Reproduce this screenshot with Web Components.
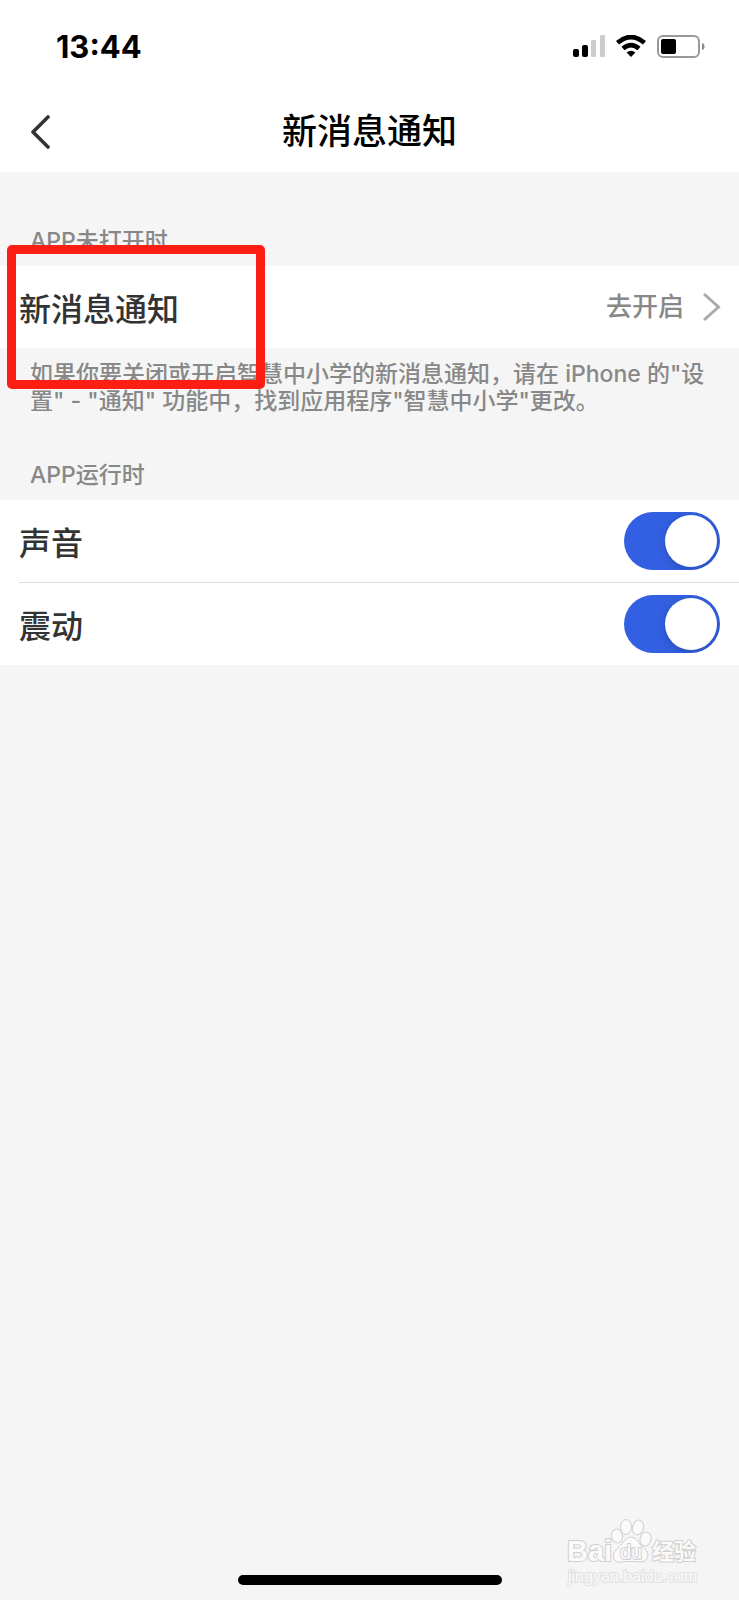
<!DOCTYPE html>
<html lang="zh-CN">
<head>
<meta charset="utf-8">
<meta name="viewport" content="width=device-width, initial-scale=1">
<title>新消息通知</title>
<style>
  html, body { margin: 0; }
  body {
    font-family: Inter, "Noto Sans CJK SC", sans-serif;
    background: #f5f5f5;
    color: #333;
  }
</style>
</head>
<body>
<settings-screen></settings-screen>
<script>
const define = (name, html, setup) => {
  const template = document.createElement('template');
  template.innerHTML = html;
  customElements.define(name, class extends HTMLElement {
    constructor() {
      super();
      this.attachShadow({ mode: 'open' }).append(template.content.cloneNode(true));
    }
    connectedCallback() { if (setup) setup(this, this.shadowRoot); }
  });
};

define('status-bar', `
  <style>
    :host { display: flex; align-items: center; justify-content: space-between; height: 92px; padding: 0 34px 0 56px; box-sizing: border-box; color: #000; }
    time { font-size: 31px; font-weight: 700; line-height: 36px; padding-top: 2px; }
    .icons { display: flex; align-items: center; gap: 11px; }
    svg { display: block; }
  </style>
  <time>13:44</time>
  <div class="icons">
    <svg width="32" height="22" viewBox="0 0 32 22" role="img" aria-label="信号">
      <rect x="0" y="14" width="6" height="8" rx="2"/><rect x="9" y="10" width="6" height="12" rx="2"/>
      <rect x="18" y="5" width="5" height="17" rx="1" fill="#ccc"/><rect x="27" y="0" width="5" height="22" rx="1" fill="#ccc"/>
    </svg>
    <svg width="30" height="22" viewBox="0 0 30 22" role="img" aria-label="无线网络">
      <path d="M1.500 7.800Q15-3.800 28.500 7.800M7 13.600Q15 6.600 23 13.600" fill="none" stroke="#000" stroke-width="4.600"/>
      <path d="M15 22l-4.400-4.400Q15 14 19.400 17.600Z"/>
    </svg>
    <svg width="48" height="23" viewBox="0 0 48 23" role="img" aria-label="电量">
      <rect x="1" y="1" width="41" height="21" rx="5" fill="none" stroke="#999" stroke-width="2"/>
      <rect x="4" y="4" width="15" height="15" rx="2"/>
      <path d="M45 8Q47.5 8.500 47.500 11.500T45 15Z" fill="#888"/>
    </svg>
  </div>`);

define('nav-bar', `
  <style>
    :host { display: grid; grid-template-columns: 80px 1fr 80px; align-items: center; height: 80px; color: #000; }
    button { display: flex; align-items: center; height: 78px; padding: 0 0 0 30px; border: 0; background: none; }
    h1 { margin: 0; text-align: center; font-size: 35px; font-weight: 500; line-height: 44px; padding-bottom: 2px; }
  </style>
  <button type="button" aria-label="返回">
    <svg width="21" height="34" viewBox="0 0 21 34" fill="none" stroke="#333" stroke-width="3.600" stroke-linecap="round" stroke-linejoin="round"><path d="M18 2L3 17L18 32"/></svg>
  </button>
  <h1><slot></slot></h1>`);

define('section-title', `
  <style>
    :host { display: block; padding: 4px 30px 0; }
    h2 { margin: 0; color: #888; font-size: 23px; font-weight: 500; line-height: 50px; }
  </style>
  <h2><slot></slot></h2>`);

define('section-note', `
  <style>
    :host { display: block; padding: 13px 30px 31px; }
    p { margin: 0; color: #888; font-size: 23px; font-weight: 500; line-height: 27px; }
  </style>
  <p><slot></slot></p>`);

define('link-row', `
  <style>
    :host { display: block; position: relative; background: #fff; }
    a { display: flex; align-items: center; justify-content: space-between; height: 82px; padding: 0 18px 0 19px; color: #333; text-decoration: none; font-size: 32px; font-weight: 500; }
    .value { display: flex; align-items: center; gap: 19px; color: #888; font-size: 26px; line-height: 32px; font-weight: 500; }
    svg { display: block; }
  </style>
  <a href="#system-settings">
    <span><slot></slot></span>
    <span class="value"><slot name="value"></slot>
      <svg width="18" height="30" viewBox="0 0 18 30" fill="none" stroke="#aaa" stroke-width="3"><path d="M1 2L15.500 15L1 28"/></svg>
    </span>
  </a>
  <slot name="mark"></slot>`);

define('highlight-box', `
  <style>
    :host { display: block; position: absolute; left: 7px; top: -21px; width: 258px; height: 144px; box-sizing: border-box; border: 9px solid #fc1e12; border-radius: 5px; pointer-events: none; z-index: 1; }
  </style>`);

define('toggle-row', `
  <style>
    :host { display: block; background: #fff; }
    label { display: flex; align-items: center; justify-content: space-between; height: 82px; padding-right: 19px; margin-left: 19px; font-size: 32px; font-weight: 500; }
    :host([divided]) label { border-bottom: 1px solid #ddd; }
    input { appearance: none; display: flex; align-items: center; width: 96px; height: 58px; margin: 0; padding: 0 3px; box-sizing: border-box; border-radius: 29px; background: #ccc; overflow: hidden; }
    input::before { content: ""; width: 52px; height: 52px; border-radius: 50%; background: #fff; box-shadow: 0 2px 10px #0003; }
    input:checked { background: #3360e2; justify-content: flex-end; }
  </style>
  <label><slot></slot><input type="checkbox" role="switch" checked></label>`,
  (host, root) => root.querySelector('input').setAttribute('aria-label', host.textContent));

define('brand-watermark', `
  <style>
    :host { display: block; position: absolute; right: 35px; bottom: 12px; pointer-events: none; }
    svg { display: block; }
    text { paint-order: stroke; stroke: #cfcfcf; stroke-width: 2px; stroke-linejoin: round; fill: #fafafa; }
  </style>
  <svg width="140" height="72" viewBox="0 0 140 72">
    <g fill="#fafafa" stroke="#cfcfcf">
      <ellipse cx="53" cy="20" rx="5.500" ry="7" transform="rotate(-12 53 20)"/>
      <ellipse cx="62" cy="11" rx="5.500" ry="7.500"/>
      <ellipse cx="74" cy="11.500" rx="5.500" ry="7.500" transform="rotate(12 74 11.500)"/>
      <ellipse cx="81.500" cy="23" rx="5.500" ry="7" transform="rotate(15 81.500 23)"/>
      <path d="M60 25Q67 17 74 25Q77 31 82 34Q86 39 82 44Q79 47 72 45.500H61Q53 48 50 43Q48 37 52 34Q57 30 60 25Z"/>
    </g>
    <text x="3" y="45" font-family="Liberation Sans" font-size="29" font-weight="700">Bai</text>
    <text x="56" y="43" font-family="Liberation Sans" font-size="20">du</text>
    <text x="88" y="43" font-family="Noto Sans CJK SC" font-size="22" font-weight="700">经验</text>
    <text x="4" y="66" font-family="Liberation Sans" font-size="16" style="stroke:#e2e2e2">jingyan.baidu.com</text>
  </svg>`);

define('settings-screen', `
  <style>
    :host { display: flex; flex-direction: column; position: relative; min-height: 100vh; overflow: hidden; }
    header { background: #fff; }
    .closed { padding-top: 40px; }
    .home { width: 264px; height: 10px; margin: auto auto 15px; border-radius: 5px; background: #000; }
  </style>
  <header>
    <status-bar></status-bar>
    <nav-bar>新消息通知</nav-bar>
  </header>
  <main>
    <section class="closed">
      <section-title>APP未打开时</section-title>
      <link-row>新消息通知<span slot="value">去开启</span><highlight-box slot="mark"></highlight-box></link-row>
      <section-note>如果你要关闭或开启智慧中小学的新消息通知，请在 iPhone 的"设置" - "通知" 功能中，找到应用程序"智慧中小学"更改。</section-note>
    </section>
    <section>
      <section-title>APP运行时</section-title>
      <toggle-row divided>声音</toggle-row>
      <toggle-row>震动</toggle-row>
    </section>
  </main>
  <div class="home"></div>
  <brand-watermark></brand-watermark>`);
</script>
</body>
</html>
